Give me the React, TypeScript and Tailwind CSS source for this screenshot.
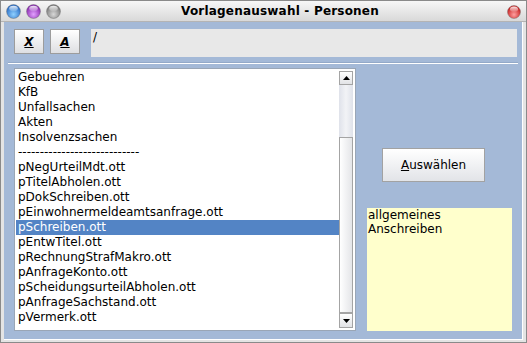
import React from 'react';

const items = [
  'Gebuehren',
  'KfB',
  'Unfallsachen',
  'Akten',
  'Insolvenzsachen',
  '----------------------------',
  'pNegUrteilMdt.ott',
  'pTitelAbholen.ott',
  'pDokSchreiben.ott',
  'pEinwohnermeldeamtsanfrage.ott',
  'pSchreiben.ott',
  'pEntwTitel.ott',
  'pRechnungStrafMakro.ott',
  'pAnfrageKonto.ott',
  'pScheidungsurteilAbholen.ott',
  'pAnfrageSachstand.ott',
  'pVermerk.ott',
];

const Orb = ({ id, from, to, size = 15 }: { id: string; from: string; to: string; size?: number }) => (
  <svg width={size} height={size} viewBox="0 0 16 16">
    <defs>
      <radialGradient id={id} cx="50%" cy="70%" r="60%">
        <stop offset="0%" stopColor={from} />
        <stop offset="100%" stopColor={to} />
      </radialGradient>
      <linearGradient id={id + 'h'} x1="0" y1="0" x2="0" y2="1">
        <stop offset="0%" stopColor="#fff" stopOpacity="0.9" />
        <stop offset="100%" stopColor="#fff" stopOpacity="0.1" />
      </linearGradient>
    </defs>
    <circle cx="8" cy="8" r="7.4" fill={`url(#${id})`} stroke="#6a6a6a" strokeWidth="0.8" strokeOpacity="0.6" />
    <ellipse cx="8" cy="4.8" rx="4.6" ry="3" fill={`url(#${id}h)`} />
  </svg>
);

const SmallButton = ({ label }: { label: string }) => (
  <button className="w-[30px] h-[25px] border border-[#9c9c9c] bg-gradient-to-b from-white to-[#dedfe2] flex items-center justify-center text-[12px] font-bold italic underline text-black">
    {label}
  </button>
);

export default function App() {
  return (
    <div
      className="w-[527px] h-[343px] border border-[#8a8a8a] bg-[#e4e4e4] flex flex-col text-black"
      style={{ fontFamily: '"DejaVu Sans", Verdana, sans-serif' }}
    >
      {/* title bar */}
      <div className="h-[21px] relative flex items-center bg-gradient-to-b from-[#f7f7f7] to-[#d9d9d9] border-b border-[#b4b4b4]">
        <div className="flex gap-[5px] pl-[5px] pt-px">
          <Orb id="o1" from="#8fd0ff" to="#2a6fc8" />
          <Orb id="o2" from="#e2a0ff" to="#8a2ab0" />
          <Orb id="o3" from="#d8d8d8" to="#7c7c7c" />
        </div>
        <div className="flex-1 text-center text-[12px] font-bold tracking-[0.2px] pr-[8px]">Vorlagenauswahl - Personen</div>
        <div className="pr-[5px] pt-px">
          <Orb id="o4" from="#ffa0a0" to="#c82020" size={14} />
        </div>
      </div>

      {/* body */}
      <div className="flex-1 bg-[#a4b9d7] ml-[3px] mr-[3px] mb-[2px] border-r border-b border-white flex flex-col">
        <div className="flex items-start mt-[7px] ml-[10px] mr-[5px] h-[28px]">
          <div className="flex gap-[6px]">
            <SmallButton label="X" />
            <SmallButton label="A" />
          </div>
          <div className="flex-1 ml-[11px] h-[28px] bg-[#e8e8e8] text-[12px] leading-[15px] pl-[2px] pt-[1px]">/</div>
        </div>

        <div className="mt-[5px] ml-[4px] mr-[4px] h-[2px] border-t border-[#93a9c8] border-b border-b-white" />

        <div className="flex mt-[4px]">
          {/* list */}
          <div className="ml-[10px] w-[342px] h-[263px] border border-[#9aa6b6] bg-white p-px flex">
            <div className="flex-1 flex flex-col text-[12px] leading-[15px]">
              {items.map((t, i) => (
                <div
                  key={t}
                  className={`h-[15px] pl-[2px] whitespace-nowrap ${i === 10 ? 'bg-[#5384c5] text-white' : ''}`}
                >
                  {t}
                </div>
              ))}
            </div>
            <div className="w-[14px] my-px mr-px flex flex-col">
              <div className="h-[14px] border border-[#a4a4a4] bg-gradient-to-b from-white to-[#e2e3e6] flex items-center justify-center">
                <svg width="7" height="4" viewBox="0 0 7 4"><path d="M3.5 0 L7 4 L0 4 Z" fill="#000" /></svg>
              </div>
              <div className="h-[52px] bg-gradient-to-r from-[#dfe2ea] via-[#f2f3f6] to-[#dfe2ea]" />
              <div className="flex-1 border border-[#a4a4a4] bg-gradient-to-r from-white to-[#e4e5e8]" />
              <div className="h-[15px] border border-[#a4a4a4] bg-gradient-to-b from-white to-[#e2e3e6] flex items-center justify-center">
                <svg width="7" height="4" viewBox="0 0 7 4"><path d="M0 0 L7 0 L3.5 4 Z" fill="#000" /></svg>
              </div>
            </div>
          </div>

          {/* right column */}
          <div className="flex-1 flex flex-col">
            <button className="mt-[80px] ml-[26px] w-[103px] h-[34px] border border-[#a2a2a2] bg-gradient-to-b from-white to-[#e2e4e8] text-[12px] flex items-center justify-center">
              <span><span className="underline">A</span>uswählen</span>
            </button>
            <div className="mt-[26px] ml-[11px] w-[145px] h-[123px] bg-[#ffffcc] text-[12px] leading-[14px] pl-px">
              allgemeines
              <br />
              Anschreiben
            </div>
          </div>
        </div>
      </div>
    </div>
  );
}
